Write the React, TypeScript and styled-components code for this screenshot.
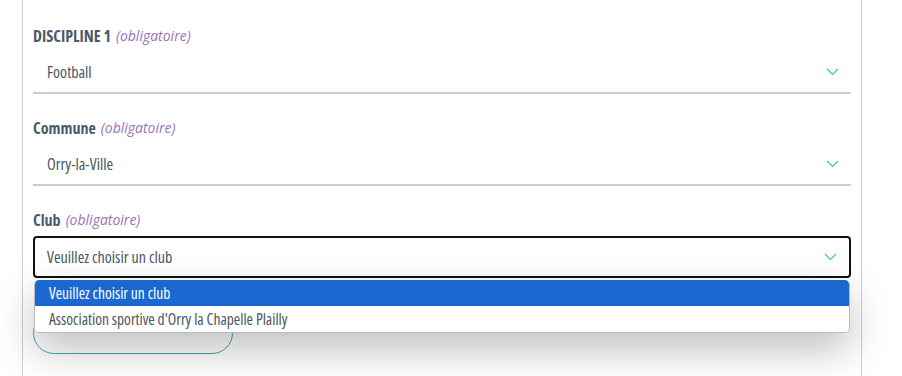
import styled, { createGlobalStyle } from 'styled-components';

const GlobalStyle = createGlobalStyle`
  html, body {
    margin: 0;
    padding: 0;
    background: #ffffff;
  }
  body {
    font-family: "Open Sans", "Noto Sans", sans-serif;
    font-stretch: 75%;
  }
`;

const Card = styled.div`
  margin-left: 22px;
  width: 818px;
  min-height: 376px;
  box-sizing: content-box;
  padding: 26px 10px 0;
  border-left: 1px solid #cfcfcf;
  border-right: 1px solid #cfcfcf;
  display: flex;
  flex-direction: column;
  gap: 24px;
`;

const Field = styled.div`
  display: flex;
  flex-direction: column;
  gap: 6px;
  position: relative;
`;

const Label = styled.div`
  height: 20px;
  display: flex;
  align-items: center;
  gap: 5px;
  font-size: 16px;
  line-height: 20px;
  font-weight: 700;
  color: #4a5a69;
`;

const Required = styled.span`
  font-weight: 400;
  font-style: italic;
  font-stretch: 100%;
  color: #9a72b8;
  font-size: 14px;
  line-height: 20px;
`;

const Select = styled.div<{ $focused?: boolean }>`
  height: 42px;
  box-sizing: border-box;
  display: flex;
  align-items: center;
  justify-content: space-between;
  padding: 0 12px 0 14px;
  font-size: 16px;
  color: #4b5661;
  background: #fff;
  border: ${p => (p.$focused ? '2px solid #111' : 'none')};
  border-bottom: 2px solid ${p => (p.$focused ? '#111' : '#c8cdd2')};
  border-radius: ${p => (p.$focused ? '4px' : '0')};
  padding-left: ${p => (p.$focused ? '12px' : '14px')};
`;

const Chevron = () => (
  <svg width="13" height="8" viewBox="0 0 13 8" fill="none">
    <path d="M1 1l5.5 5.5L12 1" stroke="#34c3c9" strokeWidth="1.2" />
  </svg>
);

const Menu = styled.div`
  position: absolute;
  top: 70px;
  left: 1px;
  right: 1px;
  z-index: 2;
  background: #fff;
  border: 1px solid #b9b9b9;
  border-top: none;
  border-radius: 5px;
  overflow: hidden;
  box-shadow: 0 16px 40px rgba(0, 0, 0, 0.26);
`;

const Option = styled.div<{ $active?: boolean }>`
  height: 26px;
  display: flex;
  align-items: center;
  padding-left: 14px;
  font-size: 15.5px;
  color: ${p => (p.$active ? '#fff' : '#4b5661')};
  background: ${p => (p.$active ? '#1b68d3' : '#fff')};
`;

const Button = styled.button`
  margin-top: 10px;
  width: 200px;
  height: 42px;
  border: 1px solid #3aaeb0;
  border-radius: 21px;
  background: #fff;
`;

export default function App() {
  return (
    <>
      <GlobalStyle />
      <Card>
        <Field>
          <Label>
            DISCIPLINE 1 <Required>(obligatoire)</Required>
          </Label>
          <Select>
            Football
            <Chevron />
          </Select>
        </Field>
        <Field>
          <Label>
            Commune <Required>(obligatoire)</Required>
          </Label>
          <Select>
            Orry-la-Ville
            <Chevron />
          </Select>
        </Field>
        <Field>
          <Label>
            Club <Required>(obligatoire)</Required>
          </Label>
          <Select $focused>
            Veuillez choisir un club
            <Chevron />
          </Select>
          <Menu>
            <Option $active>Veuillez choisir un club</Option>
            <Option>Association sportive d'Orry la Chapelle Plailly</Option>
          </Menu>
        </Field>
        <Button aria-label="Valider" />
      </Card>
    </>
  );
}
